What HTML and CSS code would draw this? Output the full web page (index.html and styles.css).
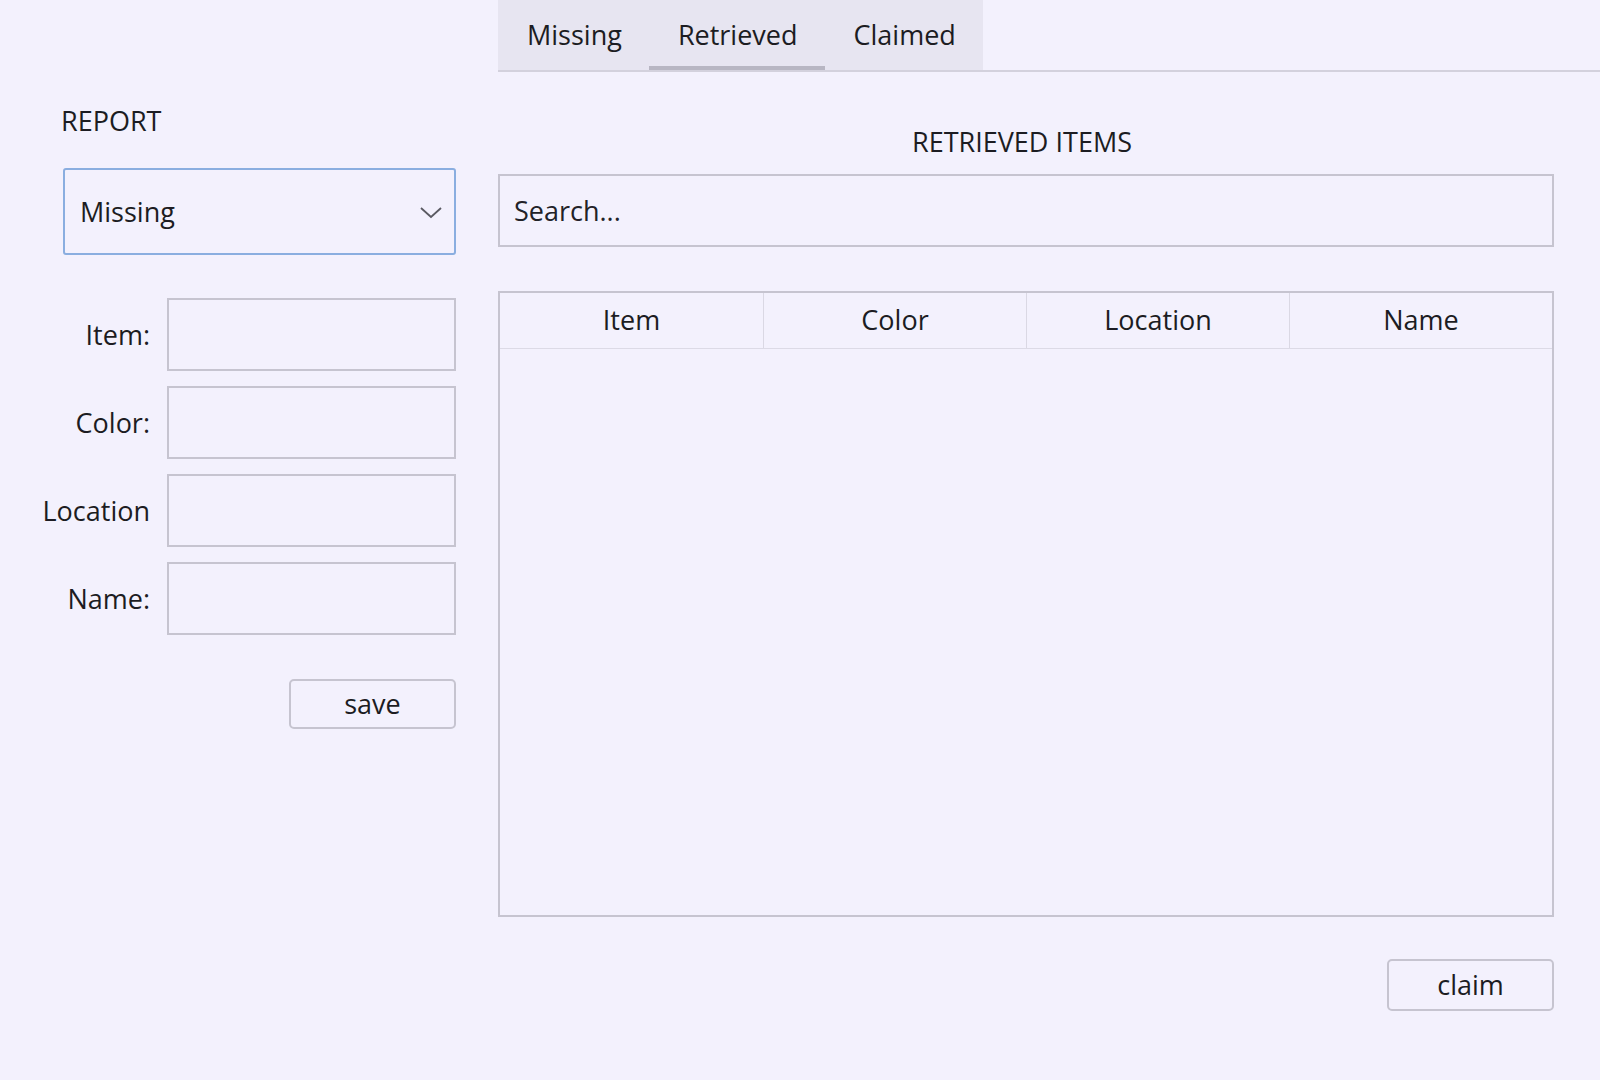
FILE: index.html
```html
<!DOCTYPE html>
<html lang="en">
<head>
<meta charset="utf-8">
<title>Lost and Found</title>
<link rel="stylesheet" href="styles.css">
</head>
<body>
<div class="app">
  <aside class="report">
    <div class="report-title">REPORT</div>
    <div class="select">
      <span class="select-value">Missing</span>
      <svg class="chevron" width="22" height="12" viewBox="0 0 22 12"><polyline points="1,1 11,10 21,1" fill="none" stroke="#5a5a62" stroke-width="1.8"/></svg>
    </div>
    <div class="form">
      <label class="form-label">Item:</label>
      <div class="field"></div>
      <label class="form-label">Color:</label>
      <div class="field"></div>
      <label class="form-label">Location</label>
      <div class="field"></div>
      <label class="form-label">Name:</label>
      <div class="field"></div>
    </div>
    <div class="actions">
      <button class="btn btn-save">save</button>
    </div>
  </aside>
  <main class="main">
    <nav class="tabbar">
      <div class="tabs">
        <div class="tab">Missing</div>
        <div class="tab tab-active">Retrieved</div>
        <div class="tab">Claimed</div>
      </div>
    </nav>
    <section class="content">
      <h2 class="content-title">RETRIEVED ITEMS</h2>
      <div class="search">Search...</div>
      <div class="table">
        <div class="thead">
          <div class="th">Item</div>
          <div class="th">Color</div>
          <div class="th">Location</div>
          <div class="th">Name</div>
        </div>
        <div class="tbody"></div>
      </div>
      <div class="actions">
        <button class="btn btn-claim">claim</button>
      </div>
    </section>
  </main>
</div>
</body>
</html>
```

FILE: styles.css
```css
* { box-sizing: border-box; }

html, body {
  margin: 0;
  padding: 0;
}

body {
  background: #f3f1fd;
  color: #1c1c22;
  font-family: "Open Sans", "Noto Sans", sans-serif;
  font-size: 27px;
  line-height: 32px;
  width: 1600px;
  height: 1080px;
  overflow: hidden;
}

.app {
  display: flex;
  height: 1080px;
}

/* ---------- left report panel ---------- */
.report {
  width: 498px;
  flex: none;
  padding: 105px 42px 0 63px;
  display: flex;
  flex-direction: column;
}

.report-title {
  margin-left: -2px;
}

.select {
  margin-top: 31px;
  height: 87px;
  border: 2px solid #8aaee0;
  border-radius: 3px;
  display: flex;
  align-items: center;
  justify-content: space-between;
  padding: 0 12px 0 15px;
}

.chevron {
  display: block;
  margin-top: 2px;
}

.form {
  margin-top: 43px;
  display: grid;
  grid-template-columns: minmax(0, 1fr) 289px;
  column-gap: 17px;
  row-gap: 15px;
}

.form-label {
  align-self: center;
  display: flex;
  justify-content: flex-end;
  white-space: nowrap;
  min-width: 0;
}

.field {
  height: 73px;
  border: 2px solid #c6c4d0;
  background: #f3f1fd;
}

.actions {
  display: flex;
  justify-content: flex-end;
}

.btn {
  font: inherit;
  color: inherit;
  background: #f3f1fd;
  border: 2px solid #c6c4d0;
  border-radius: 5px;
  height: 50px;
  width: 167px;
  padding: 0;
  line-height: 32px;
}

.btn-save {
  margin-top: 44px;
}

/* ---------- right main panel ---------- */
.main {
  flex: 1;
  display: flex;
  flex-direction: column;
}

.tabbar {
  height: 72px;
  border-bottom: 2px solid #d3d1dd;
  display: flex;
}

.tabs {
  display: flex;
  background: #e7e5f1;
  height: 70px;
}

.tab {
  padding: 4px 27px 0 29px;
  height: 70px;
  display: flex;
  align-items: center;
  border-bottom: 4px solid transparent;
}

.tab-active {
  border-bottom-color: #b8b6c3;
}

.content {
  padding: 0 46px 0 0;
  display: flex;
  flex-direction: column;
}

.content-title {
  margin: 54px 8px 0 0;
  font-size: 27px;
  font-weight: 400;
  line-height: 32px;
  text-align: center;
}

.search {
  margin-top: 16px;
  height: 73px;
  border: 2px solid #c6c4d0;
  display: flex;
  align-items: center;
  padding-left: 14px;
  color: #222228;
}

.table {
  margin-top: 44px;
  height: 626px;
  border: 2px solid #c6c4d0;
  display: flex;
  flex-direction: column;
}

.thead {
  display: grid;
  grid-template-columns: repeat(4, 1fr);
  height: 56px;
  border-bottom: 1px solid #dcdae6;
}

.th {
  display: flex;
  align-items: center;
  justify-content: center;
  border-left: 1px solid #dad8e4;
  padding-bottom: 2px;
}

.th:first-child {
  border-left: none;
}

.tbody {
  flex: 1;
}

.btn-claim {
  margin-top: 42px;
  height: 52px;
}
```
